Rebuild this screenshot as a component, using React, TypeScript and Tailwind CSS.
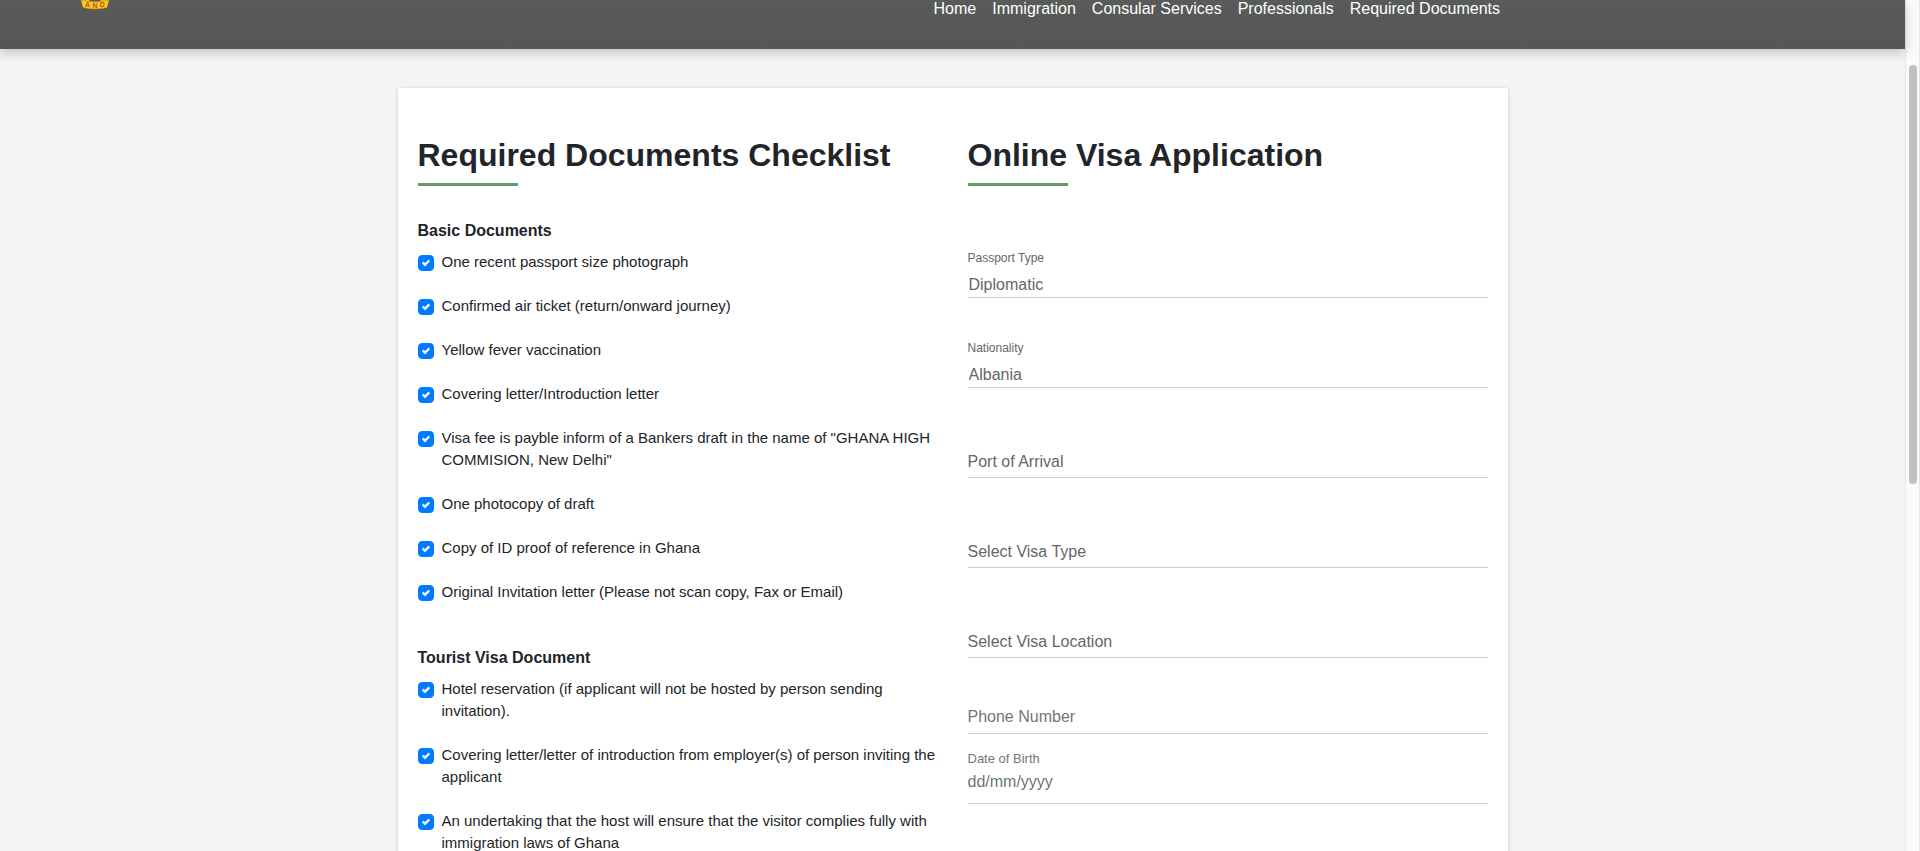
const basicDocuments = [
  'One recent passport size photograph',
  'Confirmed air ticket (return/onward journey)',
  'Yellow fever vaccination',
  'Covering letter/Introduction letter',
  'Visa fee is payble inform of a Bankers draft in the name of "GHANA HIGH COMMISION, New Delhi"',
  'One photocopy of draft',
  'Copy of ID proof of reference in Ghana',
  'Original Invitation letter (Please not scan copy, Fax or Email)',
];

const touristDocuments = [
  'Hotel reservation (if applicant will not be hosted by person sending invitation).',
  'Covering letter/letter of introduction from employer(s) of person inviting the applicant',
  'An undertaking that the host will ensure that the visitor complies fully with immigration laws of Ghana',
];

const navLinks = ['Home', 'Immigration', 'Consular Services', 'Professionals', 'Required Documents'];

function Logo() {
  return (
    <svg viewBox="0 0 30 10" className="h-[10px] w-[30px]" role="img" aria-label="Coat of arms">
      <path d="M1 0 L29 0 L27 7.4 Q15 10.4 3 7.4 Z" fill="#f6cf1c" />
      <path d="M1 0.6 Q15 3.4 29 0.6" fill="none" stroke="#a98a1a" strokeWidth="0.6" />
      <path d="M9 0 H21 L20.4 1 Q15 2 9.6 1 Z" fill="#585b59" />
      <path d="M3 7.6 Q15 10.4 27 7.6" fill="none" stroke="#b8921b" strokeWidth="0.6" />
      <g fontSize="7" fontWeight="700" fill="#d9401e" textAnchor="middle" className="font-['Liberation_Sans',sans-serif]">
        <text x="7.6" y="7">A</text>
        <text x="15" y="7.5">N</text>
        <text x="22.4" y="7">D</text>
      </g>
    </svg>
  );
}

function Header() {
  return (
    <header className="relative flex items-start justify-between bg-linear-to-b from-[#585b59] to-[#565656] pb-8 shadow-[0_4px_10px_rgba(0,0,0,0.2)]">
      <a href="#home" className="ml-20 block">
        <Logo />
      </a>
      <nav className="mr-[405px] flex gap-4 text-base leading-[17px] text-white">
        {navLinks.map((link) => (
          <a key={link} href="#nav" className="whitespace-nowrap">
            {link}
          </a>
        ))}
      </nav>
    </header>
  );
}

function Title({ children }: { children: string }) {
  return (
    <h2 className="text-[32px] leading-10 font-bold after:mt-2 after:block after:h-[3px] after:w-[100px] after:bg-[#669966]">
      {children}
    </h2>
  );
}

function Checklist({ title, items }: { title: string; items: string[] }) {
  return (
    <section>
      <h3 className="mb-2 text-base leading-6 font-bold">{title}</h3>
      <ul className="flex flex-col gap-[22px]">
        {items.map((item) => (
          <li key={item}>
            <label className="flex gap-2 text-[15px] leading-[22px]">
              <span className="relative mt-1 size-4 shrink-0">
                <input
                  type="checkbox"
                  defaultChecked
                  className="peer block size-4 appearance-none rounded-[4px] border border-[#adb5bd] checked:border-[#007bff] checked:bg-[#007bff]"
                />
                <svg viewBox="0 0 8 8" className="pointer-events-none absolute top-1 left-1 hidden size-2 peer-checked:block">
                  <path fill="#fff" stroke="#fff" strokeWidth="0.3" d="M6.564.75l-3.59 3.612-1.538-1.55L0 4.26 2.974 7.25 8 2.193z" />
                </svg>
              </span>
              <span>{item}</span>
            </label>
          </li>
        ))}
      </ul>
    </section>
  );
}

const line = 'border-b border-[#cccdd0]';

function FilledSelect({ id, label, value }: { id: string; label: string; value: string }) {
  return (
    <div className={`flex h-[90px] flex-col justify-end ${line}`}>
      <label htmlFor={id} className="text-xs leading-4">
        {label}
      </label>
      <select id={id} className="mt-[6px] h-[25px] w-full appearance-none bg-transparent pl-px text-base">
        <option>{value}</option>
      </select>
    </div>
  );
}

function EmptySelect({ id, label }: { id: string; label: string }) {
  return (
    <div className={`flex h-[90px] flex-col justify-end ${line}`}>
      <select id={id} aria-label={label} className="mb-[3px] h-6 w-full appearance-none bg-transparent text-base">
        <option>{label}</option>
      </select>
    </div>
  );
}

export default function App() {
  return (
    <div className="flex h-screen overflow-hidden bg-[#f4f4f4] font-['Liberation_Sans',Arial,sans-serif] text-[#212529]">
      <div className="min-w-0 flex-1">
        <Header />
        <main className="mx-auto mt-[39px] grid max-w-[1110px] grid-cols-2 gap-[30px] bg-white px-5 pt-[47px] pb-10 shadow-[0_1px_4px_rgba(0,0,0,0.18)]">
          <div>
            <Title>Required Documents Checklist</Title>
            <div className="mt-[33px] flex flex-col gap-[43px]">
              <Checklist title="Basic Documents" items={basicDocuments} />
              <Checklist title="Tourist Visa Document" items={touristDocuments} />
            </div>
          </div>
          <form className="text-[#666666]">
            <div className="text-[#212529]">
              <Title>Online Visa Application</Title>
            </div>
            <div className="mt-[22px]">
              <FilledSelect id="passport" label="Passport Type" value="Diplomatic" />
              <FilledSelect id="nationality" label="Nationality" value="Albania" />
              <EmptySelect id="port" label="Port of Arrival" />
              <EmptySelect id="visa-type" label="Select Visa Type" />
              <EmptySelect id="visa-location" label="Select Visa Location" />
              <div className={`flex h-[76px] flex-col justify-end ${line}`}>
                <input
                  type="tel"
                  aria-label="Phone Number"
                  placeholder="Phone Number"
                  className="mb-1 h-6 w-full bg-transparent text-base placeholder:text-[#757575]"
                />
              </div>
              <div className={`flex h-[70px] flex-col justify-end ${line}`}>
                <label htmlFor="birth" className="text-[13px] leading-4 text-[#757575]">
                  Date of Birth
                </label>
                <input
                  id="birth"
                  type="text"
                  placeholder="dd/mm/yyyy"
                  className="mt-[3px] mb-[9px] h-6 w-full bg-transparent text-base placeholder:text-[#6c757d]"
                />
              </div>
            </div>
          </form>
        </main>
      </div>
      <div className="w-[15px] shrink-0 border-x border-[#e8e8e8] bg-[#fafafa] px-[3px] pt-[65px]" aria-hidden="true">
        <div className="h-[419px] w-2 rounded-full bg-[#c1c1c1]" />
      </div>
    </div>
  );
}
